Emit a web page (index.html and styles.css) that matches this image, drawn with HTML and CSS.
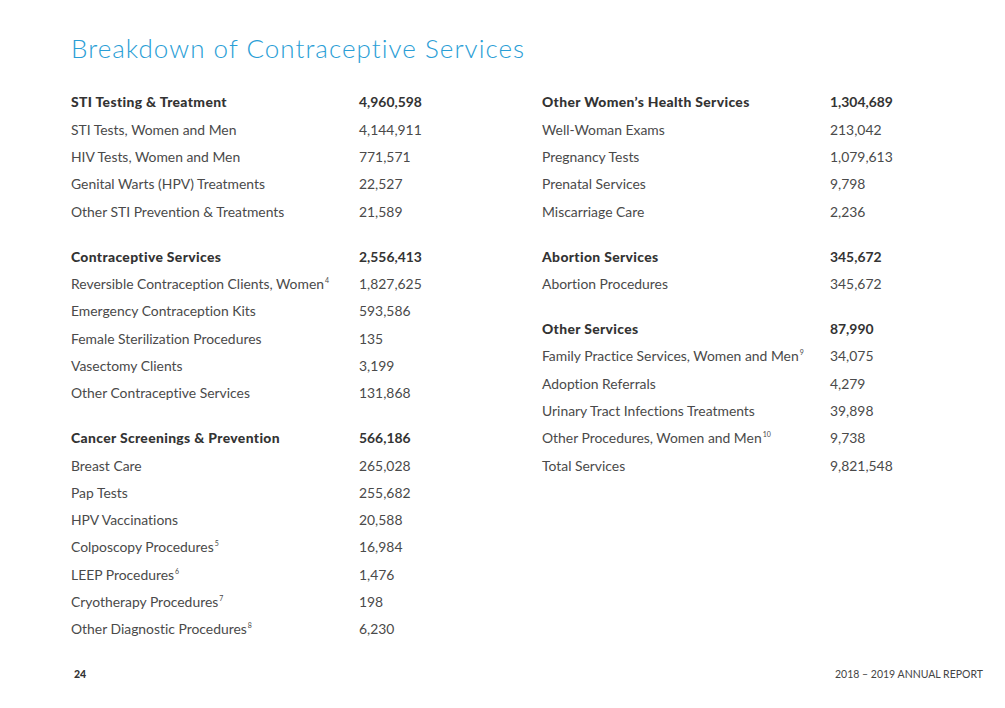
FILE: index.html
```html
<!DOCTYPE html>
<html lang="en">
<head>
<meta charset="utf-8">
<title>Breakdown of Contraceptive Services</title>
<link rel="stylesheet" href="styles.css">
</head>
<body>
<div class="page">
  <h1 class="title">Breakdown of Contraceptive Services</h1>
  <div class="columns">
    <div class="col">
      <div class="group">
        <div class="row head"><span class="label">STI Testing &amp; Treatment</span><span>4,960,598</span></div>
        <div class="row"><span>STI Tests, Women and Men</span><span>4,144,911</span></div>
        <div class="row"><span>HIV Tests, Women and Men</span><span>771,571</span></div>
        <div class="row"><span>Genital Warts (HPV) Treatments</span><span>22,527</span></div>
        <div class="row"><span>Other STI Prevention &amp; Treatments</span><span>21,589</span></div>
      </div>
      <div class="group">
        <div class="row head"><span class="label">Contraceptive Services</span><span>2,556,413</span></div>
        <div class="row"><span>Reversible Contraception Clients, Women<sup>4</sup></span><span>1,827,625</span></div>
        <div class="row"><span>Emergency Contraception Kits</span><span>593,586</span></div>
        <div class="row"><span>Female Sterilization Procedures</span><span>135</span></div>
        <div class="row"><span>Vasectomy Clients</span><span>3,199</span></div>
        <div class="row"><span>Other Contraceptive Services</span><span>131,868</span></div>
      </div>
      <div class="group">
        <div class="row head"><span class="label">Cancer Screenings &amp; Prevention</span><span>566,186</span></div>
        <div class="row"><span>Breast Care</span><span>265,028</span></div>
        <div class="row"><span>Pap Tests</span><span>255,682</span></div>
        <div class="row"><span>HPV Vaccinations</span><span>20,588</span></div>
        <div class="row"><span>Colposcopy Procedures<sup>5</sup></span><span>16,984</span></div>
        <div class="row"><span>LEEP Procedures<sup>6</sup></span><span>1,476</span></div>
        <div class="row"><span>Cryotherapy Procedures<sup>7</sup></span><span>198</span></div>
        <div class="row"><span>Other Diagnostic Procedures<sup>8</sup></span><span>6,230</span></div>
      </div>
    </div>
    <div class="col">
      <div class="group">
        <div class="row head"><span class="label">Other Women’s Health Services</span><span>1,304,689</span></div>
        <div class="row"><span>Well-Woman Exams</span><span>213,042</span></div>
        <div class="row"><span>Pregnancy Tests</span><span>1,079,613</span></div>
        <div class="row"><span>Prenatal Services</span><span>9,798</span></div>
        <div class="row"><span>Miscarriage Care</span><span>2,236</span></div>
      </div>
      <div class="group">
        <div class="row head"><span class="label">Abortion Services</span><span>345,672</span></div>
        <div class="row"><span>Abortion Procedures</span><span>345,672</span></div>
      </div>
      <div class="group">
        <div class="row head"><span class="label">Other Services</span><span>87,990</span></div>
        <div class="row"><span>Family Practice Services, Women and Men<sup>9</sup></span><span>34,075</span></div>
        <div class="row"><span>Adoption Referrals</span><span>4,279</span></div>
        <div class="row"><span>Urinary Tract Infections Treatments</span><span>39,898</span></div>
        <div class="row"><span>Other Procedures, Women and Men<sup>10</sup></span><span>9,738</span></div>
        <div class="row"><span>Total Services</span><span>9,821,548</span></div>
      </div>
    </div>
  </div>
  <footer class="footer">
    <span class="page-num">24</span>
    <span class="report">2018 – 2019 ANNUAL REPORT</span>
  </footer>
</div>
</body>
</html>
```
FILE: styles.css
```css
html, body {
  margin: 0;
  padding: 0;
  background: #ffffff;
}
body {
  font-family: Lato, "Noto Sans", sans-serif;
  color: #4a4a4a;
  font-variant-ligatures: none;
}
.page {
  width: 1005px;
  height: 708px;
  box-sizing: border-box;
  padding: 30px 22px 0 71px;
  display: flex;
  flex-direction: column;
}
.title {
  margin: 0;
  font-weight: 300;
  font-size: 26px;
  line-height: 36px;
  letter-spacing: 1.03px;
  color: #2a9ed6;
}
.columns {
  display: grid;
  grid-template-columns: 471px 1fr;
  margin-top: 22.2px;
}
.group + .group {
  margin-top: 17.7px;
}
.row {
  display: grid;
  grid-template-columns: 288px auto;
  font-size: 13.9px;
  line-height: 27.33px;
  height: 27.33px;
  white-space: nowrap;
}
.row.head {
  font-weight: 700;
  color: #333333;
}
.row.head .label {
  font-weight: 900;
  letter-spacing: 0.35px;
}
sup {
  font-size: 7px;
  line-height: 0;
  vertical-align: 0;
  position: relative;
  top: -6px;
  margin-left: 1px;
}
.footer {
  margin-top: auto;
  margin-bottom: 28px;
  display: flex;
  justify-content: space-between;
  align-items: baseline;
  font-size: 10.5px;
  color: #444;
}
.page-num {
  font-weight: 900;
  color: #333;
  padding-left: 3px;
}
```
